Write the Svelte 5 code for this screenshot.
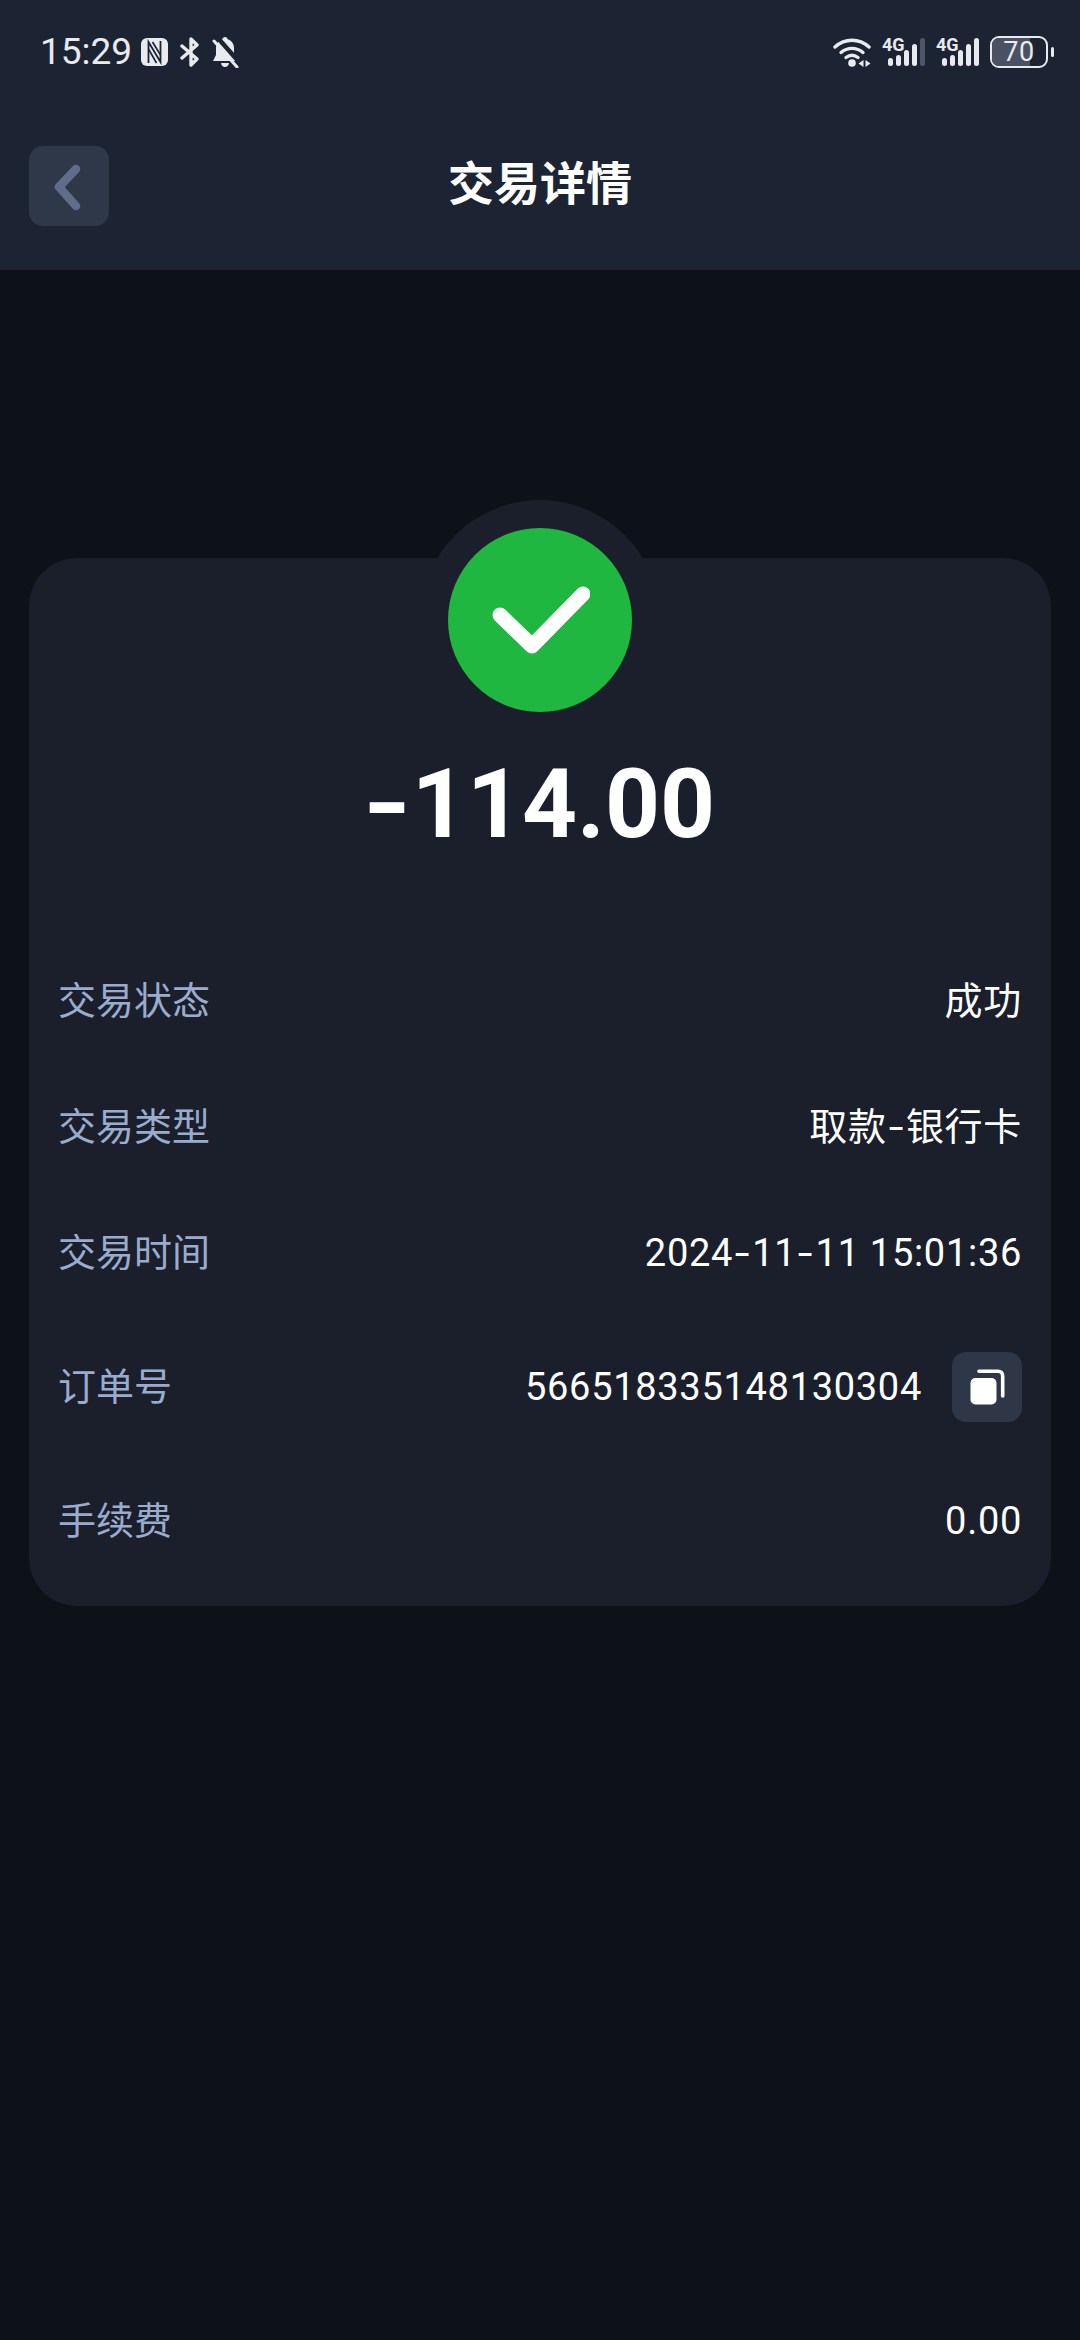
<script>
  const rows = [
    { label: '交易状态', value: '成功' },
    { label: '交易类型', value: '取款-银行卡' },
    { label: '交易时间', value: '2024-11-11 15:01:36' },
    { label: '订单号', value: '566518335148130304', copy: true },
    { label: '手续费', value: '0.00' }
  ];
  const bars = [8, 11, 16, 22];
</script>

<div class="page">
  <header class="header">
    <div class="status-bar">
      <div class="status-left">
        <span class="time">15:29</span>
        <svg class="nfc" viewBox="0 0 27 28" width="27" height="28">
          <rect width="27" height="28" rx="6" fill="#e8eaee"/>
          <path fill="none" stroke="#1c2433" stroke-width="1.800" d="M7.500 25V4l12 20V3"/>
          <path fill="none" stroke="#1c2433" stroke-width="1.600" d="M11.500 4l8 13M7.500 11l8 14"/>
        </svg>
        <svg class="bt" viewBox="0 0 20 30" width="20" height="30">
          <path fill="none" stroke="#e8eaee" stroke-width="3.400" stroke-linejoin="round" stroke-linecap="round" d="M2 9l15 13-6 6V2l6 6L2 21"/>
        </svg>
        <svg class="bell" viewBox="0 0 28 31" width="28" height="31">
          <path fill="#e8eaee" d="M14 0c1.500 0 2.500 1 2.700 2.300C20.500 3.500 23 7 23 11v7l3 6H2l3-6v-7c0-4 2.500-7.500 6.300-8.700C11.500 1 12.500 0 14 0zM10 26h8c-.3 2.500-2 4-4 4s-3.700-1.500-4-4z"/>
          <path fill="none" stroke="#1c2433" stroke-width="4.500" d="M6 0l22 25"/>
          <path fill="none" stroke="#e8eaee" stroke-width="3" stroke-linecap="round" d="M3 4l23 26"/>
        </svg>
      </div>
      <div class="status-right">
        <svg class="wifi" viewBox="0 0 38 29" width="38" height="29">
          <g fill="none" stroke="#e8eaee" stroke-width="3.400" stroke-linecap="round">
            <path d="M2 9c10-9 24-9 34 0"/>
            <path d="M8 14.500c6.500-5.500 15.500-5.500 22 0"/>
            <path d="M13 19.500c4-3 8-3 12 0"/>
          </g>
          <circle cx="19" cy="25" r="3.800" fill="#e8eaee"/>
          <path fill="#e8eaee" d="M30.500 22v7l-5-3.500zM32.500 22v7l5-3.500z"/>
        </svg>
        <div class="signal">
          <span class="net">4G</span>
          <div class="bars">
            {#each bars as h}
              <i class="bar" style="height: {h}px"></i>
            {/each}
            <i class="bar off"></i>
          </div>
        </div>
        <div class="signal">
          <span class="net">4G</span>
          <div class="bars">
            {#each bars as h}
              <i class="bar" style="height: {h}px"></i>
            {/each}
            <i class="bar"></i>
          </div>
        </div>
        <div class="battery">
          <div class="battery-body">
            <div class="battery-fill" style="width: 70%"></div>
            <span class="battery-text">70</span>
          </div>
          <div class="battery-tip"></div>
        </div>
      </div>
    </div>
    <div class="nav">
      <button class="back" aria-label="返回">
        <svg viewBox="0 0 30 50" width="30" height="50">
          <path fill="none" stroke="#5f6d8a" stroke-width="8.500" stroke-linecap="round" stroke-linejoin="round" d="M22 8L5 26l17 19"/>
        </svg>
      </button>
      <h1 class="title">交易详情</h1>
    </div>
  </header>

  <main class="main">
    <section class="card">
      <div class="badge">
        <div class="badge-circle">
          <svg viewBox="0 0 100 70" width="100" height="70">
            <path fill="none" stroke="#fff" stroke-width="15" stroke-linecap="round" stroke-linejoin="round" d="M10 30L42 61 93 9"/>
          </svg>
        </div>
      </div>
      <div class="amount"><span class="minus">-</span>114.00</div>
      <div class="rows">
        {#each rows as row}
          <div class="row">
            <span class="label">{row.label}</span>
            <div class="value-wrap">
              <span class="value">
                {#each row.value.split('-') as part, i}{#if i}<span class="dash">-</span>{/if}{part}{/each}
              </span>
              {#if row.copy}
                <button class="copy" aria-label="复制">
                  <svg viewBox="0 0 36 36" width="36" height="36">
                    <rect x="1.500" y="9" width="26" height="26.500" rx="5" fill="#fff"/>
                    <path fill="none" stroke="#fff" stroke-width="3.600" stroke-linecap="round" d="M10 2.200h19c3 0 4.700 2 4.700 4.700v20"/>
                  </svg>
                </button>
              {/if}
            </div>
          </div>
        {/each}
      </div>
    </section>
  </main>
</div>

<style>
  :global(body) {
    margin: 0;
    background: #0d1219;
  }

  .page {
    width: 1080px;
    height: 2340px;
    background: #0d1219;
    font-family: Roboto, "Noto Sans CJK SC", sans-serif;
    color: #fff;
    overflow: hidden;
  }

  /* Header */
  .header {
    height: 270px;
    background: #1c2433;
    box-sizing: border-box;
    padding-top: 28px;
  }

  .status-bar {
    height: 48px;
    padding: 0 26px 0 40px;
    display: flex;
    align-items: center;
    justify-content: space-between;
  }

  .status-left {
    display: flex;
    align-items: center;
  }

  .time {
    font-size: 37px;
    line-height: 48px;
    color: #e8eaee;
    margin-right: 9px;
  }

  .bt {
    margin-left: 12px;
  }

  .bell {
    margin-left: 11px;
  }

  .status-right {
    display: flex;
    align-items: center;
    gap: 11px;
  }

  .signal {
    position: relative;
    width: 43px;
    height: 28px;
  }

  .net {
    position: absolute;
    left: 0;
    top: 0;
    font-size: 18px;
    line-height: 14px;
    font-weight: 700;
    color: #e8eaee;
  }

  .bars {
    position: absolute;
    right: 0;
    bottom: 0;
    display: flex;
    align-items: flex-end;
    gap: 3px;
  }

  .bar {
    display: block;
    width: 5px;
    height: 28px;
    border-radius: 2.500px;
    background: #e8eaee;
  }

  .bar.off {
    background: #4e5666;
  }

  .battery {
    display: flex;
    align-items: center;
    gap: 3px;
  }

  .battery-body {
    position: relative;
    width: 58px;
    height: 32px;
    box-sizing: border-box;
    border: 2.500px solid #e8eaee;
    border-radius: 9px;
    overflow: hidden;
    display: flex;
    align-items: center;
    justify-content: center;
  }

  .battery-fill {
    position: absolute;
    left: 0;
    top: 0;
    bottom: 0;
    background: #4a5162;
  }

  .battery-text {
    position: relative;
    font-size: 27px;
    letter-spacing: 0.500px;
    color: #e8eaee;
  }

  .battery-tip {
    width: 3px;
    height: 10px;
    border-radius: 2px;
    background: #e8eaee;
  }

  .nav {
    position: relative;
    height: 80px;
    margin-top: 70px;
    padding-left: 29px;
  }

  .back {
    width: 80px;
    height: 80px;
    padding: 0;
    border: 0;
    border-radius: 14px;
    background: #2e3848;
    display: flex;
    align-items: center;
    justify-content: center;
  }

  .title {
    position: absolute;
    left: 0;
    right: 0;
    top: 0;
    margin: 0;
    text-align: center;
    font-size: 46px;
    line-height: 76px;
    font-weight: 700;
    color: #fff;
  }

  /* Card */
  .main {
    padding: 288px 29px 0;
  }

  .card {
    position: relative;
    background: #1a1f2b;
    border-radius: 48px;
    padding: 148px 0 58px;
  }

  .badge {
    position: absolute;
    left: 50%;
    top: -58px;
    width: 240px;
    height: 240px;
    margin-left: -120px;
    border-radius: 50%;
    background: #1a1f2b;
    display: flex;
    align-items: center;
    justify-content: center;
  }

  .badge-circle {
    width: 184px;
    height: 184px;
    border-radius: 50%;
    background: #1fb73f;
    display: flex;
    align-items: center;
    justify-content: center;
  }

  .amount {
    position: relative;
    padding-left: 9px;
    text-align: center;
    font-size: 96px;
    line-height: 196px;
    font-weight: 700;
    color: #fff;
  }

  .minus {
    display: inline-block;
    transform: scaleX(1.3);
    transform-origin: right center;
  }

  .rows {
    padding: 72px 29px 0;
    display: flex;
    flex-direction: column;
    gap: 72px;
  }

  .row {
    min-height: 54px;
    display: flex;
    align-items: center;
    justify-content: space-between;
  }

  .label {
    font-size: 38px;
    line-height: 54px;
    color: #9aaccd;
  }

  .value-wrap {
    display: flex;
    align-items: center;
    gap: 30px;
  }

  .value {
    font-size: 38px;
    line-height: 54px;
    letter-spacing: 0.700px;
    color: #fff;
  }

  .dash {
    display: inline-block;
    margin: 0 4px;
    transform: scaleX(1.4);
  }

  .copy {
    width: 70px;
    height: 70px;
    padding: 0;
    border: 0;
    border-radius: 14px;
    background: #2d3747;
    display: flex;
    align-items: center;
    justify-content: center;
  }
</style>
